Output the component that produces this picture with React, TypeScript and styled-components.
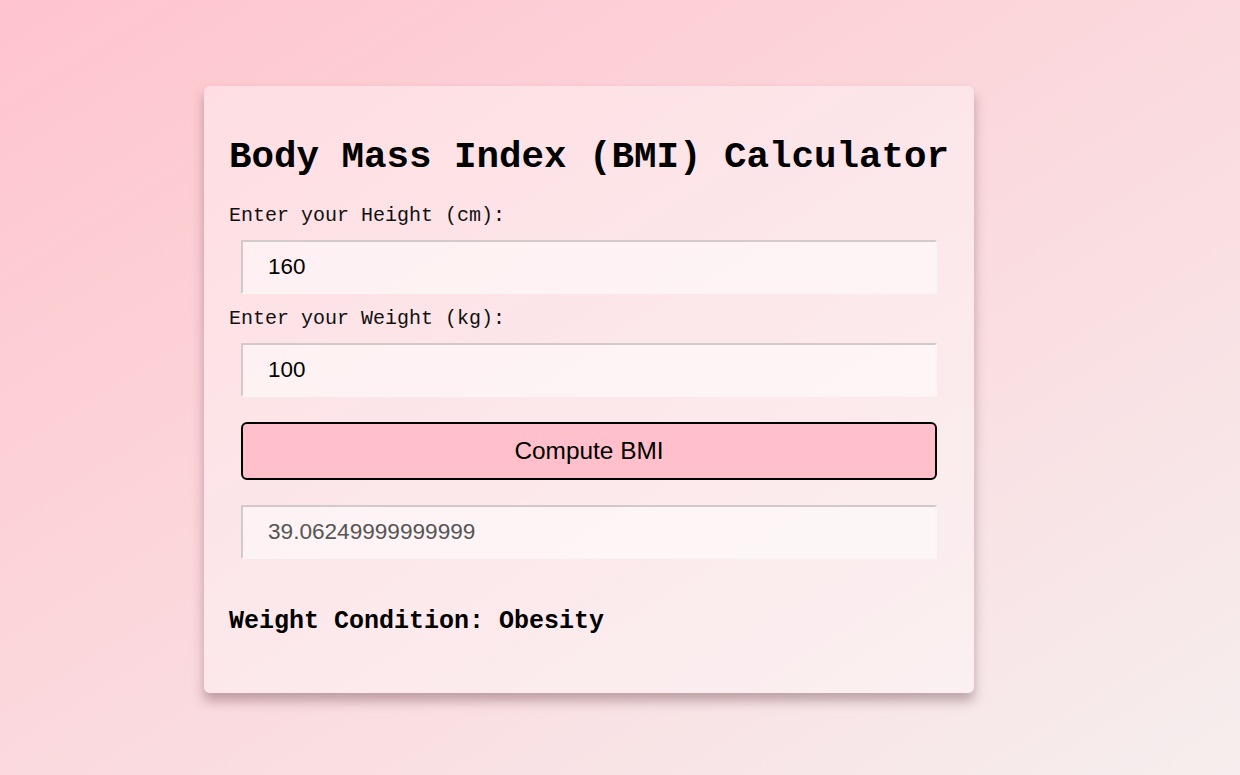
import React from 'react';
import styled, { createGlobalStyle } from 'styled-components';

const GlobalStyle = createGlobalStyle`
  html, body { margin: 0; padding: 0; }
  body {
    min-height: 100vh;
    background: linear-gradient(to bottom right, #ffc4cd, #f6eeee);
    font-family: "Liberation Mono", "Courier New", monospace;
  }
`;

const Page = styled.div`
  min-height: 100vh;
  padding: 86px 0 0 204px;
  box-sizing: border-box;
`;

const Card = styled.div`
  width: 770px;
  box-sizing: border-box;
  padding: 50px 25px 57px;
  background: rgba(255, 255, 255, 0.38);
  border-radius: 6px;
  box-shadow: 0 8px 12px rgba(80, 40, 50, 0.35);
  display: flex;
  flex-direction: column;
`;

const Title = styled.h1`
  margin: 0;
  font-family: "Liberation Mono", "Courier New", monospace;
  font-weight: bold;
  font-size: 37.5px;
  line-height: 42.5px;
  color: #000;
  white-space: nowrap;
`;

const Label = styled.label<{ $top: number; $nudge: number }>`
  display: block;
  margin-top: ${p => p.$top}px;
  padding-top: ${p => p.$nudge}px;
  font-size: 20px;
  line-height: 22.7px;
  color: #111;
`;

const Field = styled.input<{ $top: number; $muted?: boolean }>`
  display: block;
  margin: ${p => p.$top}px 12px 0;
  height: 54px;
  box-sizing: border-box;
  padding: 0 25px;
  font-family: "Liberation Sans", Arial, sans-serif;
  font-size: ${p => (p.$muted ? '22.6px' : '22.4px')};
  color: ${p => (p.$muted ? '#555' : '#000')};
  background: rgba(255, 255, 255, 0.5);
  border-top: 2px solid #d2c9ca;
  border-left: 2px solid #d2c9ca;
  border-right: 2px solid #fbf4f5;
  border-bottom: 2px solid #fbf4f5;
  border-radius: 0;
  outline: none;
`;

const Button = styled.button`
  display: block;
  margin: 25px 12px 0;
  height: 58px;
  box-sizing: border-box;
  background: #ffc0cb;
  border: 2px solid #000;
  border-radius: 6px;
  font-family: "Liberation Sans", Arial, sans-serif;
  font-size: 24.4px;
  color: #000;
  cursor: pointer;
`;

const Condition = styled.h3`
  margin: 49px 0 0;
  font-family: "Liberation Mono", "Courier New", monospace;
  font-weight: bold;
  font-size: 25px;
  line-height: 28.3px;
  color: #000;
`;

function conditionOf(bmi: number) {
  if (bmi < 18.5) return 'Underweight';
  if (bmi < 25) return 'Normal weight';
  if (bmi < 30) return 'Overweight';
  return 'Obesity';
}

export default function App() {
  const [height, setHeight] = React.useState('160');
  const [weight, setWeight] = React.useState('100');
  const [bmi, setBmi] = React.useState<number>(100 / (1.6 * 1.6));

  const compute = () => {
    const h = parseFloat(height) / 100;
    const w = parseFloat(weight);
    if (h > 0 && w > 0) setBmi(w / (h * h));
  };

  return (
    <>
      <GlobalStyle />
      <Page>
        <Card>
          <Title>Body Mass Index (BMI) Calculator</Title>
          <Label $top={25} $nudge={1} htmlFor="height">Enter your Height (cm):</Label>
          <Field $top={13} id="height" value={height} onChange={e => setHeight(e.target.value)} />
          <Label $top={12} $nudge={2} htmlFor="weight">Enter your Weight (kg):</Label>
          <Field $top={12} id="weight" value={weight} onChange={e => setWeight(e.target.value)} />
          <Button onClick={compute}>Compute BMI</Button>
          <Field $top={25} $muted readOnly value={String(bmi)} />
          <Condition>Weight Condition: {conditionOf(bmi)}</Condition>
        </Card>
      </Page>
    </>
  );
}
